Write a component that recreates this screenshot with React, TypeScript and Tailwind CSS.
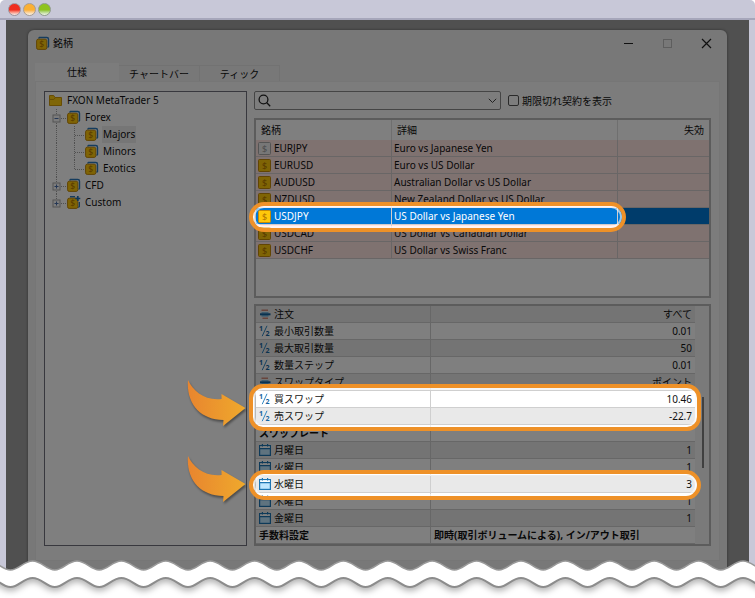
import { type ReactNode } from "react";
import { clsx } from "clsx";

/* ---------- icons ---------- */

function Coin({ muted = false }: { muted?: boolean }) {
  return (
    <svg viewBox="0 0 13 13" className="size-[13px] shrink-0" aria-hidden="true">
      <rect
        x="0.5"
        y="0.5"
        width="12"
        height="12"
        rx="1"
        fill={muted ? "#efefef" : "#ffc80a"}
        stroke={muted ? "#a8a8a8" : "#c48a08"}
      />
      <text
        x="6.5"
        y="9.7"
        textAnchor="middle"
        fontSize="9"
        fontFamily="Noto Sans, sans-serif"
        fill={muted ? "#9a9a9a" : "#b07400"}
      >
        $
      </text>
    </svg>
  );
}

function CoinStack({ plus = false }: { plus?: boolean }) {
  return (
    <svg viewBox="0 0 13 13" className="size-[13px] shrink-0 overflow-visible" aria-hidden="true">
      <path
        d={plus ? "M3 .7h5M12.3 6v4.5l-1 1" : "M2.5 1.5l1-1h7.3q1.7 0 1.7 1.7v7.3l-1 1"}
        fill="none"
        stroke="#2b78bd"
        strokeWidth="1.4"
      />
      <rect x="0.6" y="2.2" width="10.2" height="10.2" rx="1.6" fill="#ffc80a" stroke="#c48a08" />
      <text
        x="5.7"
        y="10.4"
        textAnchor="middle"
        fontSize="8.5"
        fontFamily="Noto Sans, sans-serif"
        fill="#b07400"
      >
        $
      </text>
      {plus && <path d="M10.8 0v5M8.3 2.5h5" stroke="#1f6fb5" strokeWidth="1.7" />}
    </svg>
  );
}

function Folder() {
  return (
    <svg viewBox="0 0 13 13" className="size-[13px] shrink-0" aria-hidden="true">
      <path d="M.5 11.5v-10h4.2l1.3 2h6.5v8z" fill="#ffcc10" stroke="#d09a08" />
      <path d="M.5 5.5h4.3l1.4-1.8" fill="none" stroke="#d09a08" />
    </svg>
  );
}

function HalfIcon() {
  return (
    <svg viewBox="0 0 12 12" className="size-3 shrink-0" aria-hidden="true">
      <g fill="#14649f" fontFamily="Noto Sans, sans-serif" fontWeight="bold">
        <text x="0" y="6" fontSize="7">
          1
        </text>
        <text x="6.5" y="11" fontSize="7">
          2
        </text>
      </g>
      <path d="M3.2 11.2L8 .8" stroke="#2f86c2" />
    </svg>
  );
}

function OrderIcon() {
  return (
    <svg viewBox="0 0 12 12" className="size-3 shrink-0" aria-hidden="true">
      <path d="M2.5 2.2h6.5M3.5 10.3h5.5" stroke="#d08a78" strokeWidth="1.6" />
      <path d="M2.5 4.8h7M2.5 7.8h7" stroke="#5aa9dc" strokeWidth="1.2" />
      <path d="M1 6.3h10.5" stroke="#14649f" strokeWidth="2" />
    </svg>
  );
}

function CalendarIcon() {
  return (
    <svg viewBox="0 0 12 12" className="size-3 shrink-0" aria-hidden="true">
      <rect x="0.6" y="1.6" width="10.8" height="9.8" fill="#bfe6ff" stroke="#1d75b3" strokeWidth="1.2" />
      <rect x="1.2" y="2.2" width="9.6" height="2" fill="#fff" />
      <path d="M.6 4.6h10.8M3.4 0v2.6M8.6 0v2.6" stroke="#1d75b3" strokeWidth="1.2" />
    </svg>
  );
}

/* ---------- tree ---------- */

type Guide = "line" | "tee" | "end" | "plus" | "plusEnd" | "minus";

type TreeItem = {
  label: string;
  guides: Guide[];
  icon: ReactNode;
  selected?: boolean;
};

const TREE: TreeItem[] = [
  { label: "FXON MetaTrader 5", guides: [], icon: <Folder /> },
  { label: "Forex", guides: ["minus"], icon: <CoinStack /> },
  { label: "Majors", guides: ["line", "tee"], icon: <CoinStack />, selected: true },
  { label: "Minors", guides: ["line", "tee"], icon: <CoinStack /> },
  { label: "Exotics", guides: ["line", "end"], icon: <CoinStack /> },
  { label: "CFD", guides: ["plus"], icon: <CoinStack /> },
  { label: "Custom", guides: ["plusEnd"], icon: <CoinStack plus /> },
];

function TreeGuide({ kind }: { kind: Guide }) {
  const box = kind === "plus" || kind === "plusEnd" || kind === "minus";
  const stops = kind === "end" || kind === "plusEnd";
  return (
    <svg viewBox="0 0 18 17" className="h-[17px] w-[18px] shrink-0" aria-hidden="true">
      <path
        d={`M7.5 0V${stops ? 9 : 17}${kind === "line" ? "" : "M8 9.5H17"}`}
        fill="none"
        stroke="#a0a0a0"
        strokeDasharray="1 1"
      />
      {box && (
        <>
          <rect x="4" y="6" width="7" height="7" fill="#f8f8f8" stroke="#a8a8a8" />
          <path d={kind === "minus" ? "M5.5 9.5h4" : "M5.5 9.5h4M7.5 7.5v4"} stroke="#4a6fa8" />
        </>
      )}
    </svg>
  );
}

function SymbolTree() {
  return (
    <ul className="w-[203px] shrink-0 border border-[#70707c] bg-white pl-1">
      {TREE.map((item) => (
        <li key={item.label} className="flex h-[17px] items-center">
          {item.guides.map((g, i) => (
            <TreeGuide key={i} kind={g} />
          ))}
          {item.icon}
          <span className={clsx("ml-1 px-px leading-[17px]", item.selected && "bg-[#ececec]")}>{item.label}</span>
        </li>
      ))}
    </ul>
  );
}

/* ---------- tables ---------- */

const SYMBOLS = [
  { code: "EURJPY", name: "Euro vs Japanese Yen", muted: true },
  { code: "EURUSD", name: "Euro vs US Dollar" },
  { code: "AUDUSD", name: "Australian Dollar vs US Dollar" },
  { code: "NZDUSD", name: "New Zealand Dollar vs US Dollar" },
  { code: "USDJPY", name: "US Dollar vs Japanese Yen", active: true },
  { code: "USDCAD", name: "US Dollar vs Canadian Dollar" },
  { code: "USDCHF", name: "US Dollar vs Swiss Franc" },
];

function SymbolTable() {
  return (
    <div className="min-h-[180px] border-2 border-[#b8b8b8] bg-white">
      <table className="w-full table-fixed border-separate border-spacing-0">
        <colgroup>
          <col className="w-[136px]" />
          <col />
          <col className="w-[91px]" />
        </colgroup>
        <thead>
          <tr className="h-5 text-left">
            <th className="border-r border-[#dedede] p-0 pl-[5px] font-normal">銘柄</th>
            <th className="border-r border-[#dedede] p-0 pl-[5px] font-normal">詳細</th>
            <th className="p-0 pr-[5px] text-right font-normal">失効</th>
          </tr>
        </thead>
        <tbody>
          {SYMBOLS.map((s) => (
            <tr key={s.code} className={clsx("h-[17px]", s.active ? "bg-[#0078d7] text-white" : "bg-[#ffe4e1]")}>
              <td className="border-r border-b border-[#d2cccc] p-0 pl-0.5">
                <div className="flex h-4 items-center gap-[3px]">
                  <Coin muted={s.muted} />
                  {s.code}
                </div>
              </td>
              <td className="truncate border-r border-b border-[#d2cccc] p-0 pl-0.5">{s.name}</td>
              <td className="border-b border-[#d2cccc] p-0" />
            </tr>
          ))}
        </tbody>
      </table>
    </div>
  );
}

type Spec = { label: string; value: string; icon?: ReactNode };

const SPECS: Spec[] = [
  { label: "注文", value: "すべて", icon: <OrderIcon /> },
  { label: "最小取引数量", value: "0.01", icon: <HalfIcon /> },
  { label: "最大取引数量", value: "50", icon: <HalfIcon /> },
  { label: "数量ステップ", value: "0.01", icon: <HalfIcon /> },
  { label: "スワップタイプ", value: "ポイント", icon: <OrderIcon /> },
  { label: "買スワップ", value: "10.46", icon: <HalfIcon /> },
  { label: "売スワップ", value: "-22.7", icon: <HalfIcon /> },
  { label: "スワップレート", value: "" },
  { label: "月曜日", value: "1", icon: <CalendarIcon /> },
  { label: "火曜日", value: "1", icon: <CalendarIcon /> },
  { label: "水曜日", value: "3", icon: <CalendarIcon /> },
  { label: "木曜日", value: "1", icon: <CalendarIcon /> },
  { label: "金曜日", value: "1", icon: <CalendarIcon /> },
  { label: "手数料設定", value: "即時(取引ボリュームによる), イン/アウト取引" },
];

function SpecTable() {
  return (
    <div className="flex border-2 border-[#b8b8b8] bg-[#f4f4f4]">
      <table className="min-w-0 flex-1 table-fixed border-separate border-spacing-0">
        <colgroup>
          <col className="w-[175px]" />
          <col />
        </colgroup>
        <tbody>
          {SPECS.map((s) => (
            <tr key={s.label} className="h-[17px] odd:bg-[#e9e9e9] even:bg-white">
              <th
                scope="row"
                className={clsx(
                  "border-r border-b border-[#cfcfcf] p-0 pl-[3px] text-left",
                  s.icon ? "font-normal" : "font-bold",
                )}
              >
                <div className="flex h-4 items-center gap-[3px]">
                  {s.icon}
                  {s.label}
                </div>
              </th>
              <td
                className={clsx(
                  "truncate border-b border-[#cfcfcf] p-0 px-[3px]",
                  s.icon ? "text-right" : "text-left font-bold",
                )}
              >
                {s.value}
              </td>
            </tr>
          ))}
        </tbody>
      </table>
      <div className="w-[14px] pt-[91px] pl-[7px]">
        <div className="h-[71px] w-0.5 bg-[#808080]" />
      </div>
    </div>
  );
}

/* ---------- annotations ---------- */

function Cutouts({ inset = false }: { inset?: boolean }) {
  return inset ? (
    <>
      <rect x="248" y="187" height="20" rx="10" className="w-[calc(100%-376px)]" />
      <rect x="248" y="369" height="37" rx="9" className="w-[calc(100%-301px)]" />
      <rect x="248" y="455" height="20" rx="10" className="w-[calc(100%-301px)]" />
    </>
  ) : (
    <>
      <rect x="245" y="184" height="26" rx="13" className="w-[calc(100%-370px)]" />
      <rect x="245" y="366" height="43" rx="12" className="w-[calc(100%-295px)]" />
      <rect x="245" y="452" height="26" rx="13" className="w-[calc(100%-295px)]" />
    </>
  );
}

function Arrow({ y }: { y: number }) {
  return (
    <g transform={`translate(182 ${y})`} className="drop-shadow-[1px_2px_1px_rgba(0,0,0,0.4)]">
      <path
        d="M0 0C5 11 17 21 33.5 19V14L57.5 28L35 46L35.5 40C12 40-2 23 0 0Z"
        fill="url(#arrowFill)"
      />
    </g>
  );
}

/** Dims the whole window except for the rows that are called out. */
function Spotlight() {
  return (
    <svg className="pointer-events-none absolute inset-0 size-full" aria-hidden="true">
      <defs>
        <mask id="holes">
          <rect width="100%" height="100%" fill="#fff" />
          <g fill="#000">
            <Cutouts />
          </g>
        </mask>
        <linearGradient id="arrowFill">
          <stop offset="0" stopColor="#e8852f" />
          <stop offset="1" stopColor="#efa92c" />
        </linearGradient>
      </defs>
      <rect width="100%" height="100%" fill="#000" fillOpacity="0.5" mask="url(#holes)" />
      <g fill="none" stroke="#fff" strokeOpacity="0.6" strokeWidth="2">
        <Cutouts inset />
      </g>
      <g fill="none" stroke="#ee9128" strokeWidth="4">
        <Cutouts />
      </g>
      <Arrow y={360} />
      <Arrow y={436} />
    </svg>
  );
}

const WAVE = 44.4;

function wavePath(y: number) {
  let d = `M-34 ${y + 9}`;
  for (let i = 0; i < 90; i++) {
    d += `c8.5 0 13-9 ${WAVE / 2}-9s13.7 9 ${WAVE / 2} 9`;
  }
  return d;
}

/** Torn paper edge along the bottom. */
function TornEdge() {
  return (
    <svg className="absolute inset-x-0 bottom-0 h-[38px] w-full" aria-hidden="true">
      <path d={`${wavePath(1)}V60H-34Z`} fill="#fff" stroke="#999" strokeWidth="1.5" />
      <path
        d={`${wavePath(18)}V-20H-34Z`}
        fill="#fff"
        stroke="#8c8c8c"
        strokeWidth="2"
        clipPath="url(#lower)"
        className="drop-shadow-[0_3px_3px_rgba(0,0,0,0.3)]"
      />
      <clipPath id="lower">
        <rect y="14" width="100%" height="30" />
      </clipPath>
    </svg>
  );
}

/* ---------- page ---------- */

const TABS = [
  { label: "仕様", className: "h-[18px] w-[84px] bg-[#f9f9f9]" },
  { label: "チャートバー", className: "h-4 w-[81px] border border-b-0 border-l-0 border-[#e4e4e4]" },
  { label: "ティック", className: "h-4 w-20 border border-b-0 border-l-0 border-[#e4e4e4]" },
];

export default function App() {
  return (
    <div className="relative overflow-hidden bg-white pb-6 font-['Noto_Sans','Noto_Sans_CJK_JP',sans-serif] text-[10px] leading-4 text-[#111]">
      <header className="flex h-5 items-center gap-0.5 rounded-t-[5px] border-b-2 border-[#a6a6ba] bg-[#c8c8d8] pt-px pl-2">
        <span className="size-[13px] rounded-full border border-[#a09098] bg-linear-to-b from-[#f02c20] from-55% to-[#f4f0ec]" />
        <span className="size-[13px] rounded-full border border-[#a89c90] bg-linear-to-b from-[#fbb034] from-55% to-[#f8f4ec]" />
        <span className="size-[13px] rounded-full border border-[#8f9c88] bg-linear-to-b from-[#8fc31f] from-55% to-[#f2f6ec]" />
      </header>

      <div className="relative border-x-[6px] border-[#c8c8d8] bg-[#a0a0a0] pt-2.5">
        <main className="mx-[22px] rounded-t-md bg-[#f0f0f0] pb-[13px] shadow-[0_0_3px_rgba(0,0,0,0.4)]">
          <div className="flex h-[26px] items-center pl-2">
            <CoinStack />
            <h1 className="ml-1 flex-1">銘柄</h1>
            <div className="flex gap-7 pr-[15px]">
              <button type="button" aria-label="最小化" className="size-[11px]">
                <svg viewBox="0 0 11 11" stroke="#222">
                  <path d="M1 5.5h9" />
                </svg>
              </button>
              <button type="button" aria-label="最大化" className="size-[11px]">
                <svg viewBox="0 0 11 11" fill="none" stroke="#bdbdbd">
                  <rect x="1.5" y="1.5" width="8" height="8" />
                </svg>
              </button>
              <button type="button" aria-label="閉じる" className="size-[11px]">
                <svg viewBox="0 0 11 11" stroke="#222" strokeWidth="1.2">
                  <path d="M1 1l9 9M10 1l-9 9" />
                </svg>
              </button>
            </div>
          </div>

          <div role="tablist" className="mt-[7px] flex items-end pl-[7px]">
            {TABS.map((t, i) => (
              <button
                key={t.label}
                type="button"
                role="tab"
                aria-selected={i === 0}
                className={clsx("flex items-center justify-center", t.className)}
              >
                {t.label}
              </button>
            ))}
          </div>

          <div className="mx-[7px] flex gap-[7px] border border-[#ececec] bg-[#f9f9f9] px-2 pt-[9px] pb-[14px]">
            <SymbolTree />
            <div className="flex min-w-0 flex-1 flex-col">
              <div className="mb-2 flex h-[19px] items-center">
                <div className="flex h-full w-[247px] items-center rounded-xs border border-[#8a8a8a] bg-[#fbfbfb] px-[3px]">
                  <svg viewBox="0 0 13 13" fill="none" stroke="#222" strokeWidth="1.3" className="size-[13px]">
                    <circle cx="5.5" cy="5.5" r="4.4" />
                    <path d="M8.8 8.8l3.4 3.4" />
                  </svg>
                  <input type="text" aria-label="銘柄を検索" className="min-w-0 flex-1 bg-transparent px-1 outline-none" />
                  <button type="button" aria-label="履歴を開く">
                    <svg viewBox="0 0 9 9" fill="none" stroke="#444" className="size-[9px]">
                      <path d="M.8 2.8l3.7 3.7 3.7-3.7" />
                    </svg>
                  </button>
                </div>
                <label className="ml-[7px] flex items-center gap-[3px]">
                  <input
                    type="checkbox"
                    className="size-[11px] appearance-none rounded-xs border border-[#555] bg-[#fbfbfb]"
                  />
                  期限切れ契約を表示
                </label>
              </div>
              <SymbolTable />
              <div className="h-1.5" />
              <SpecTable />
            </div>
          </div>
        </main>
        <Spotlight />
      </div>

      <TornEdge />
    </div>
  );
}
